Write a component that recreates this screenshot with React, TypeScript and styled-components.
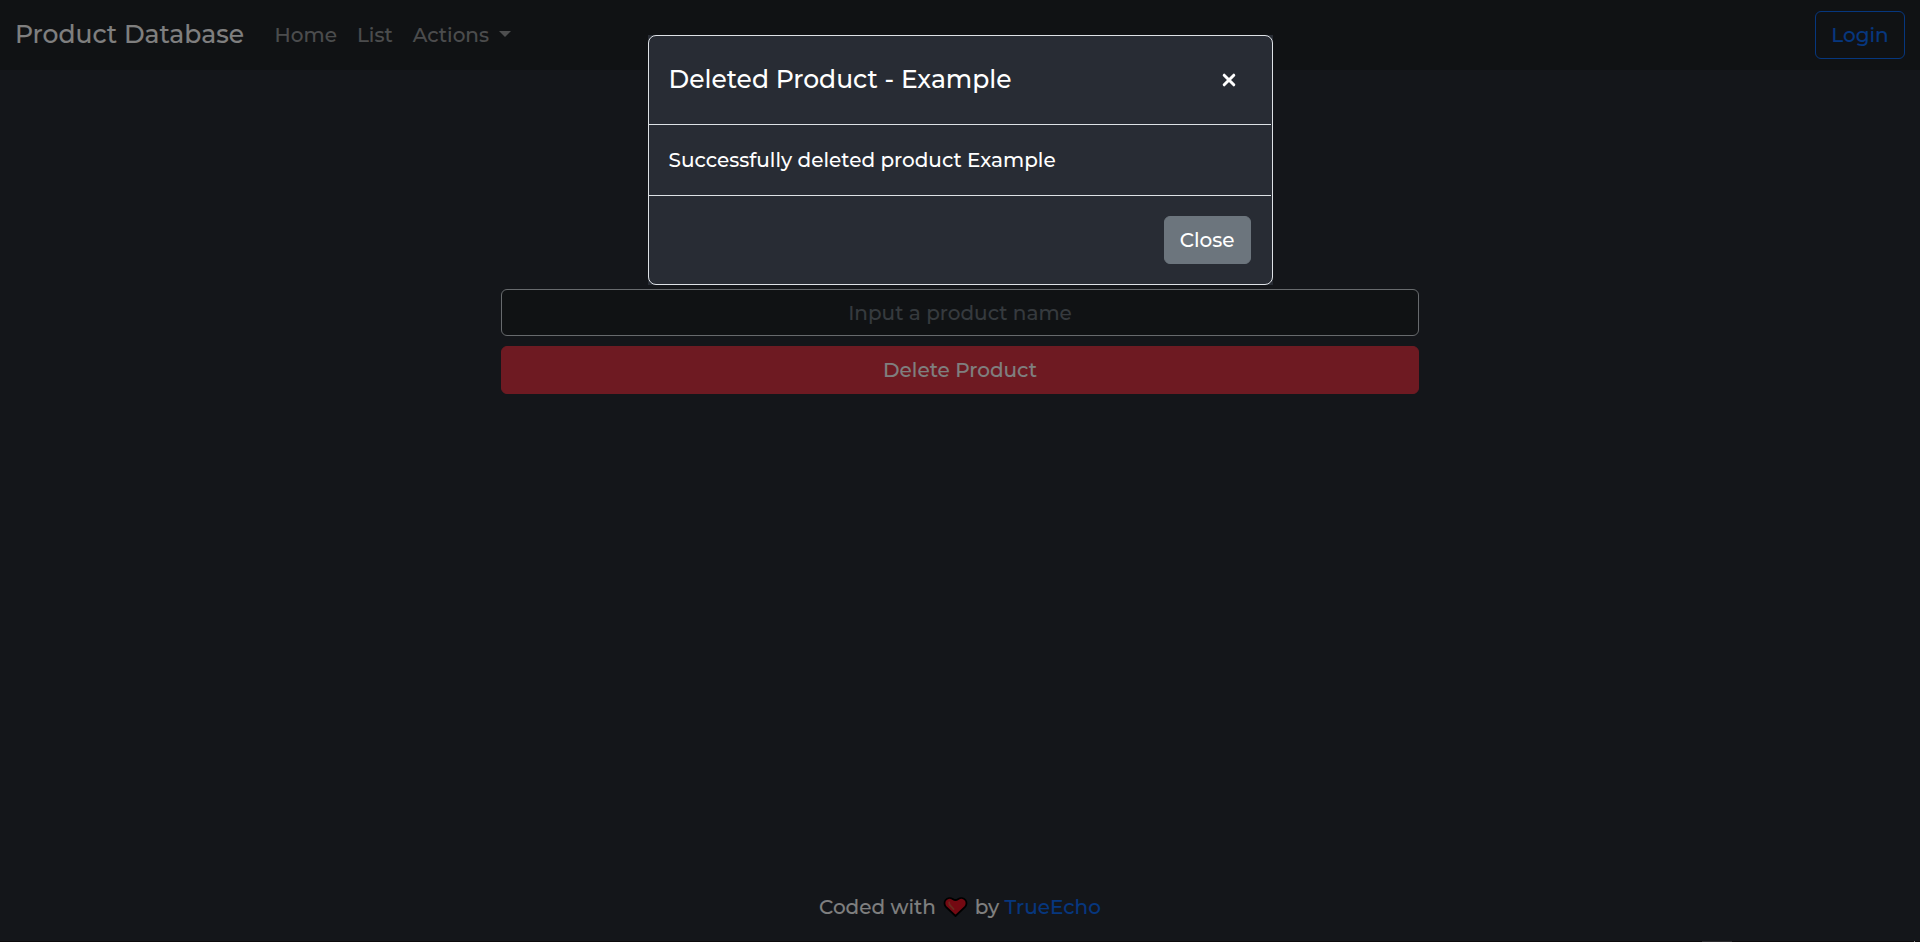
import React from "react";
import styled, { createGlobalStyle, css } from "styled-components";

const GlobalStyle = createGlobalStyle`
  *, *::before, *::after { box-sizing: border-box; }
  html { font-size: 20px; }
  body {
    margin: 0;
    overflow: hidden;
    background: #282c34;
    color: #fff;
    font-family: Montserrat, "Open Sans", sans-serif;
    font-size: 1rem;
    font-weight: 500;
    line-height: 1.5;
  }
`;

const Page = styled.div`
  display: flex;
  flex-direction: column;
  height: 100vh;
`;

const Navbar = styled.nav`
  display: flex;
  align-items: center;
  height: 70px;
  padding: 0 15px;
  background: #212529;
`;

const Brand = styled.a`
  margin-right: 20.6px;
  color: #fff;
  font-size: 1.25rem;
  text-decoration: none;
  white-space: nowrap;
`;

const NavList = styled.ul`
  display: flex;
  flex: 1;
  margin: 0;
  padding: 0;
  list-style: none;
`;

const NavLink = styled.a<{ $dropdown?: boolean }>`
  display: block;
  padding: 0 10px;
  color: rgba(255, 255, 255, 0.55);
  text-decoration: none;
  white-space: nowrap;

  ${({ $dropdown }) =>
    $dropdown &&
    css`
      &::after {
        content: "";
        display: inline-block;
        margin-left: 10px;
        vertical-align: 5px;
        border-top: 6px solid;
        border-right: 6px solid transparent;
        border-left: 6px solid transparent;
      }
    `}
`;

type Variant = "outline" | "danger" | "secondary" | "bare";

const variants = {
  outline: css`
    min-width: 90px;
    border-color: #0d6efd;
    color: #0d6efd;
  `,
  danger: css`
    border-color: #dc3545;
    background: #dc3545;
  `,
  secondary: css`
    border-color: #6c757d;
    background: #6c757d;
  `,
  bare: css`
    padding: 0 14px;
  `,
};

const Button = styled.button<{ $variant: Variant }>`
  display: inline-flex;
  align-items: center;
  justify-content: center;
  height: 48px;
  padding: 0 15px;
  border: 1px solid transparent;
  border-radius: 6px;
  background: transparent;
  color: #fff;
  font: inherit;
  ${({ $variant }) => variants[$variant]}
`;

const Main = styled.main`
  flex: 1;
  padding-top: 219px;
`;

const Form = styled.form`
  display: flex;
  flex-direction: column;
  gap: 10px;
  width: 918px;
  margin: 0 auto;
`;

const Input = styled.input`
  height: 47px;
  padding: 0 15px;
  border: 1px solid #ced4da;
  border-radius: 6px;
  background: #212529;
  color: #fff;
  font: inherit;
  text-align: center;

  &::placeholder {
    color: #6c757d;
    opacity: 1;
  }
`;

const Footer = styled.footer`
  padding-bottom: 20px;
  text-align: center;
`;

const FooterLink = styled.a`
  color: #0d6efd;
  text-decoration: none;
`;

const Heart = styled.svg`
  display: inline-block;
  width: 28px;
  height: 22px;
  vertical-align: -4px;
`;

const Cross = styled.svg`
  width: 14px;
  height: 14px;
  fill: none;
  stroke: currentColor;
  stroke-width: 3;
  stroke-linecap: round;
`;

const Backdrop = styled.div`
  position: fixed;
  inset: 0;
  padding-top: 35px;
  background: rgba(0, 0, 0, 0.5);
`;

const Dialog = styled.div`
  width: 625px;
  margin: 0 auto;
  background: #282c34;
`;

const DialogContent = styled.div`
  display: flex;
  flex-direction: column;
  padding-right: 1px;
  border: 1px solid #dee2e6;
  border-radius: 8px;
`;

const DialogHeader = styled.header`
  display: flex;
  align-items: center;
  justify-content: space-between;
  padding: 20px;
  border-bottom: 1px solid #dee2e6;
`;

const DialogTitle = styled.h5`
  margin: 0;
  font-size: 1.25rem;
  font-weight: 500;
`;

const DialogBody = styled.div`
  padding: 20px;
`;

const DialogFooter = styled.footer`
  display: flex;
  justify-content: flex-end;
  padding: 20px;
  border-top: 1px solid #dee2e6;
`;

const BottomEdge = styled.div`
  position: fixed;
  right: 0;
  bottom: 0;
  left: 0;
  display: flex;
  justify-content: flex-end;
  height: 1px;
  padding-right: 5px;
  background: #0c0a0c;
`;

const EdgeMark = styled.span<{ $width: number; $color: string; $gap?: number }>`
  width: ${({ $width }) => $width}px;
  margin-right: ${({ $gap = 0 }) => $gap}px;
  background: ${({ $color }) => $color};
`;

const HeartIcon = () => (
  <Heart viewBox="0 0 28 22" aria-label="love">
    <path
      d="M14.5 20 L5.2 11.2 C3.2 9.2 2.9 5.9 4.6 4 C6.4 1.9 9.6 1.6 11.7 2.9 Q13.3 4 14.5 4 Q15.7 4 17.3 2.9 C19.4 1.6 22.6 1.9 24.4 4 C26.1 5.9 25.8 9.2 23.8 11.2 Z"
      fill="#e81224"
      stroke="#000"
      strokeWidth="1.8"
      strokeLinejoin="round"
    />
    <path
      d="M8.2 6.3 C8 7.8 8.6 9 9.6 10 L12.6 13.2"
      fill="none"
      stroke="#d4553c"
      strokeWidth="1.8"
      strokeLinecap="round"
    />
  </Heart>
);

const CrossIcon = () => (
  <Cross viewBox="0 0 14 14">
    <path d="M2.2 2.2 L11.8 11.8 M11.8 2.2 L2.2 11.8" />
  </Cross>
);

export default function App() {
  return (
    <>
      <GlobalStyle />
      <Page>
        <Navbar>
          <Brand>Product Database</Brand>
          <NavList>
            <li><NavLink>Home</NavLink></li>
            <li><NavLink>List</NavLink></li>
            <li><NavLink $dropdown>Actions</NavLink></li>
          </NavList>
          <Button $variant="outline">Login</Button>
        </Navbar>
        <Main>
          <Form>
            <Input placeholder="Input a product name" />
            <Button $variant="danger" type="button">Delete Product</Button>
          </Form>
        </Main>
        <Footer>
          Coded with <HeartIcon /> by <FooterLink>TrueEcho</FooterLink>
        </Footer>
      </Page>
      <Backdrop>
        <Dialog role="dialog">
          <DialogContent>
            <DialogHeader>
              <DialogTitle>Deleted Product - Example</DialogTitle>
              <Button $variant="bare" aria-label="Close">
                <CrossIcon />
              </Button>
            </DialogHeader>
            <DialogBody>Successfully deleted product Example</DialogBody>
            <DialogFooter>
              <Button $variant="secondary">Close</Button>
            </DialogFooter>
          </DialogContent>
        </Dialog>
      </Backdrop>
      <BottomEdge>
        <EdgeMark $width={30} $color="#2b2a2d" $gap={182} />
        <EdgeMark $width={1} $color="#8a8a8a" />
      </BottomEdge>
    </>
  );
}
